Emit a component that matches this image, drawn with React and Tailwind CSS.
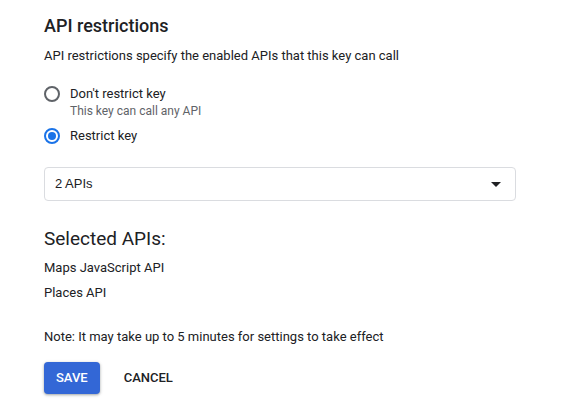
import React, { useState } from 'react';

const Radio = ({ checked, onClick, label, hint }) => (
  <div className="flex items-start gap-[10px] cursor-pointer" onClick={onClick}>
    <span
      className={`mt-[1px] w-[16px] h-[16px] rounded-full border-2 flex items-center justify-center shrink-0 ${
        checked ? 'border-[#1a73e8]' : 'border-[#5f6368]'
      }`}
    >
      {checked && <span className="w-[8px] h-[8px] rounded-full bg-[#1a73e8]" />}
    </span>
    <div>
      <div className="text-[13px] leading-[18px] text-[#202124]">{label}</div>
      {hint && <div className="text-[12px] leading-[16px] text-[#5f6368]">{hint}</div>}
    </div>
  </div>
);

export default function App() {
  const [restrict, setRestrict] = useState(true);
  const apis = ['Maps JavaScript API', 'Places API'];

  return (
    <div className="w-[576px] h-[407px] bg-white pl-[44px] pt-[14px] font-['Roboto',sans-serif] text-[#202124]">
      <h2 className="text-[18px] leading-[24px] font-medium">API restrictions</h2>
      <p className="mt-[9px] text-[13px] leading-[18px]">
        API restrictions specify the enabled APIs that this key can call
      </p>

      <div className="mt-[20px] flex flex-col gap-[8px]">
        <Radio
          checked={!restrict}
          onClick={() => setRestrict(false)}
          label="Don't restrict key"
          hint="This key can call any API"
        />
        <Radio checked={restrict} onClick={() => setRestrict(true)} label="Restrict key" />
      </div>

      <div className="mt-[22px] w-[472px] h-[34px] border border-[#dadce0] rounded-[4px] flex items-center justify-between pl-[10px] pr-[14px]">
        <span className="text-[13px] font-['Liberation_Sans',sans-serif]">2 APIs</span>
        <svg width="10" height="5" viewBox="0 0 10 5">
          <path d="M0 0h10L5 5z" fill="#202124" />
        </svg>
      </div>

      <h3 className="mt-[26px] text-[19px] leading-[24px]">Selected APIs:</h3>
      <div className="mt-[8px] flex flex-col gap-[7px]">
        {apis.map((a) => (
          <div key={a} className="text-[13px] leading-[18px]">{a}</div>
        ))}
      </div>

      <p className="mt-[26px] text-[13px] leading-[18px]">
        Note: It may take up to 5 minutes for settings to take effect
      </p>

      <div className="mt-[16px] flex items-center gap-[8px]">
        <button className="h-[32px] px-[12px] rounded-[4px] bg-[#3367d6] text-white text-[13px] font-medium uppercase shadow-[0_1px_2px_rgba(60,64,67,0.3),0_1px_3px_1px_rgba(60,64,67,0.15)]">
          Save
        </button>
        <button className="h-[32px] px-[16px] text-[13px] font-medium uppercase text-[#202124]">
          Cancel
        </button>
      </div>
    </div>
  );
}
